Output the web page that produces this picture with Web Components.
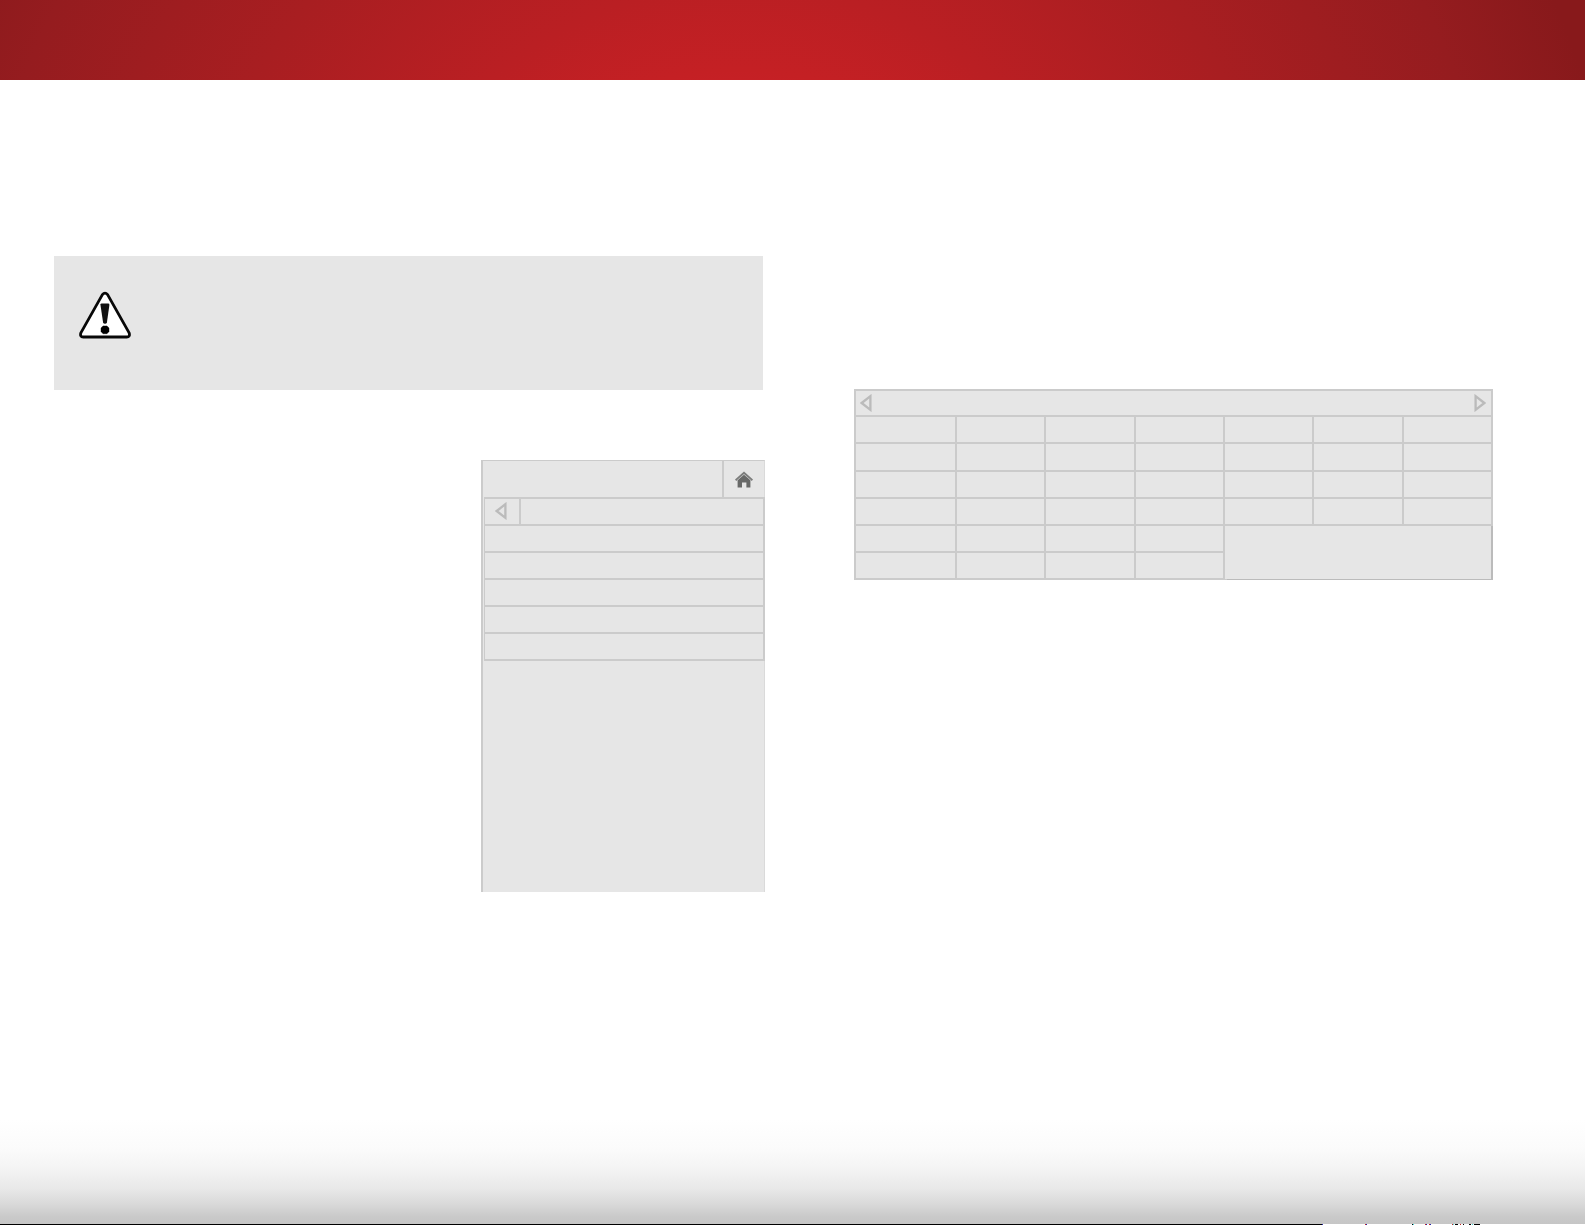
<!DOCTYPE html>
<html lang="en">
<head>
<meta charset="utf-8">
<meta name="viewport" content="width=device-width">
<title>User manual page</title>
<style>
html, body { margin: 0; background: #fff; font-family: "Open Sans", "Liberation Sans", sans-serif; --line: #cbcbcb; --fill: #e6e6e6; --mark: #bbb; }
</style>
</head>
<body>
<manual-page>
  <page-banner slot="banner"></page-banner>
  <caution-box slot="left"><warning-icon></warning-icon></caution-box>
  <tv-menu slot="left" rows="5"></tv-menu>
  <key-table slot="right"></key-table>
  <page-foot slot="foot"></page-foot>
</manual-page>
<script>
function define(name, html) {
  const t = document.createElement('template');
  t.innerHTML = html;
  customElements.define(name, class extends HTMLElement {
    constructor() {
      super();
      this.attachShadow({ mode: 'open' }).append(t.content.cloneNode(true));
    }
  });
}

define('manual-page', `
<style>
:host { display: flex; flex-direction: column; min-height: 100vh; }
main { flex: 1; display: grid; grid-template-columns: 711fr 639fr; column-gap: 89px; padding: 0 92px 0 54px; align-items: start; }
.left { display: flex; flex-direction: column; gap: 70px; padding-top: 176px; }
.right { padding-top: 309px; }
</style>
<slot name="banner"></slot>
<main>
  <section class="left"><slot name="left"></slot></section>
  <section class="right"><slot name="right"></slot></section>
</main>
<slot name="foot"></slot>`);

define('page-banner', `
<style>
:host { display: block; height: 80px; background: radial-gradient(circle at 46.7% 360px, #c62026 270px, #c42024 290px, #ba1f23 375px, #a81e21 560px, #951c1f 770px, #88191b 890px); }
</style>`);

define('caution-box', `
<style>
:host { display: flex; align-items: flex-start; box-sizing: border-box; min-height: 134px; margin-right: 2px; padding: 35px 25px; background: var(--fill); }
</style>
<slot></slot>`);

define('warning-icon', `
<style>:host, svg { display: block; }</style>
<svg width="52" height="48" viewBox="0 0 52 48" role="img" aria-label="Caution">
  <path d="M23.4 3.6 Q26 .6 28.6 3.6 L50 41.6 Q51.6 45.8 47.6 46 H4.4 Q.4 45.8 2 41.6 Z" fill="#fff" stroke="#080808" stroke-width="2.8" stroke-linejoin="round"/>
  <path d="M21.4 13.4 Q21.6 12.6 22.6 12.6 H29.2 Q30.5 12.6 30.4 13.9 L27.9 31.4 Q27.6 32.8 26 32.8 Q24.4 32.8 24.1 31.4 Z" fill="#111"/>
  <path d="M24 34.9 H28 L30 37 V40.6 L28 42.7 H24 L22 40.6 V37 Z" fill="#000" stroke="#000" stroke-width=".4" stroke-linejoin="round"/>
</svg>`);

define('arrow-icon', `
<style>
:host { display: block; }
:host([flip]) { transform: scaleX(-1); }
svg { display: block; }
</style>
<svg width="12" height="18" viewBox="0 0 12 18" aria-hidden="true">
  <path d="M10.4 2.2 L1.7 9 L10.4 15.8 Z" fill="none" stroke="#bbb" stroke-width="2.3"/>
</svg>`);

customElements.define('tv-menu', class extends HTMLElement {
  connectedCallback() {
    const rows = '<li><button type="button" aria-label="Menu item"></button></li>'.repeat(Number(this.getAttribute('rows')));
    this.attachShadow({ mode: 'open' }).innerHTML = `
<style>
:host { display: block; box-sizing: border-box; align-self: flex-end; width: 284px; min-height: 432px; background: var(--fill); border: solid var(--line); border-width: 1px 1px 0 2px; border-right-color: #dadada; }
button { display: block; box-sizing: border-box; margin: 0; padding: 0; border: 0; background: none; font: inherit; }
.head { display: flex; justify-content: flex-end; height: 36px; }
.home { width: 42px; border-left: 2px solid var(--line); padding: 0 11px; }
.home svg { display: block; }
ul { list-style: none; margin: 0 -1px 0 1px; padding: 0; border: solid var(--line); border-width: 2px 2px 0 1px; }
li { display: flex; height: 25px; border-bottom: 2px solid var(--line); }
li button { flex: 1; }
li .back { flex: none; width: 36px; border-right: 2px solid var(--line); padding: 0 0 2px 10px; }
</style>
<div class="head">
  <button class="home" type="button" aria-label="Home">
    <svg width="18" height="17" viewBox="0 0 18 17" aria-hidden="true">
      <path d="M2.6 9.2 L9 3.6 L15.4 9.2 V16.4 H11.4 V11.6 H7 V16.4 H2.6 Z" fill="#686968"/>
      <path d="M.6 9.2 L9 1.8 L17.4 9.2" fill="none" stroke="#7c7d7c" stroke-width="1.9"/>
      <path d="M2 9.6 L9 3.4 L16 9.6" fill="none" stroke="#b4b4b4" stroke-width=".6"/>
    </svg>
  </button>
</div>
<ul>
  <li><button class="back" type="button" aria-label="Back"><arrow-icon></arrow-icon></button></li>
  ${rows}
</ul>`;
  }
});

customElements.define('key-table', class extends HTMLElement {
  connectedCallback() {
    const row = (n, extra = '') => '<tr>' + '<td></td>'.repeat(n) + extra + '</tr>';
    this.attachShadow({ mode: 'open' }).innerHTML = `
<style>
:host { display: block; }
table { width: 100%; table-layout: fixed; border-collapse: separate; border-spacing: 2px; background: var(--line); }
.first { width: 99px; }
th, td { padding: 0; height: 25px; background: var(--fill); }
th { height: 24px; }
tr.tall td { height: 26px; }
.bar { display: flex; justify-content: space-between; align-items: center; padding: 0 5px 1px 4px; }
button { display: block; margin: 0; padding: 0; border: 0; background: none; }
td.blank { box-shadow: 0 1px 0 var(--fill), 2px 2px 0 var(--mark), 2px 0 0 var(--mark); }
</style>
<table>
  <colgroup><col class="first"><col span="6"></colgroup>
  <thead><tr><th colspan="7"><div class="bar">
    <button type="button" aria-label="Previous"><arrow-icon></arrow-icon></button>
    <button type="button" aria-label="Next"><arrow-icon flip></arrow-icon></button>
  </div></th></tr></thead>
  <tbody>
    ${row(7)}${row(7).replace('<tr>', '<tr class="tall">')}${row(7)}${row(7)}
    ${row(4, '<td class="blank" colspan="3" rowspan="2"></td>')}${row(4)}
  </tbody>
</table>`;
  }
});

define('page-foot', `
<style>
:host { display: block; }
.shade { height: 104px; background: linear-gradient(#fff 0, #fbfbfb 28px, #f4f4f4 48px, #e8e8e8 69px, #d9d9d9 84px, #c9c9c9 97px, #c6c6c6 104px); }
.rule { display: block; width: 100%; height: 1px; }
</style>
<div class="shade"></div>
<svg class="rule" viewBox="0 0 1585 1" preserveAspectRatio="none" aria-hidden="true" shape-rendering="crispEdges">
  <path d="M0 0H1322V1H0Z M1412 0h1v1h-1Z M1455 0h3v1h-3Z M1463 0h1v1h-1Z M1469 0h2v1h-2Z M1474 0h6v1h-6Z" fill="#000"/>
  <path d="M1365 0h1v1h-1Z M1425 0h1v1h-1Z M1429 0h1v1h-1Z M1452 0h1v1h-1Z M1460 0h1v1h-1Z" fill="#c22"/>
  <path d="M1366 0h1v1h-1Z M1426 0h1v1h-1Z M1430 0h1v1h-1Z M1322 0h1v1h-1Z" fill="#22a"/>
  <path d="M1413 0h1v1h-1Z M1453 0h1v1h-1Z M1472 0h1v1h-1Z" fill="#4dd"/>
</svg>`);
</script>
</body>
</html>
